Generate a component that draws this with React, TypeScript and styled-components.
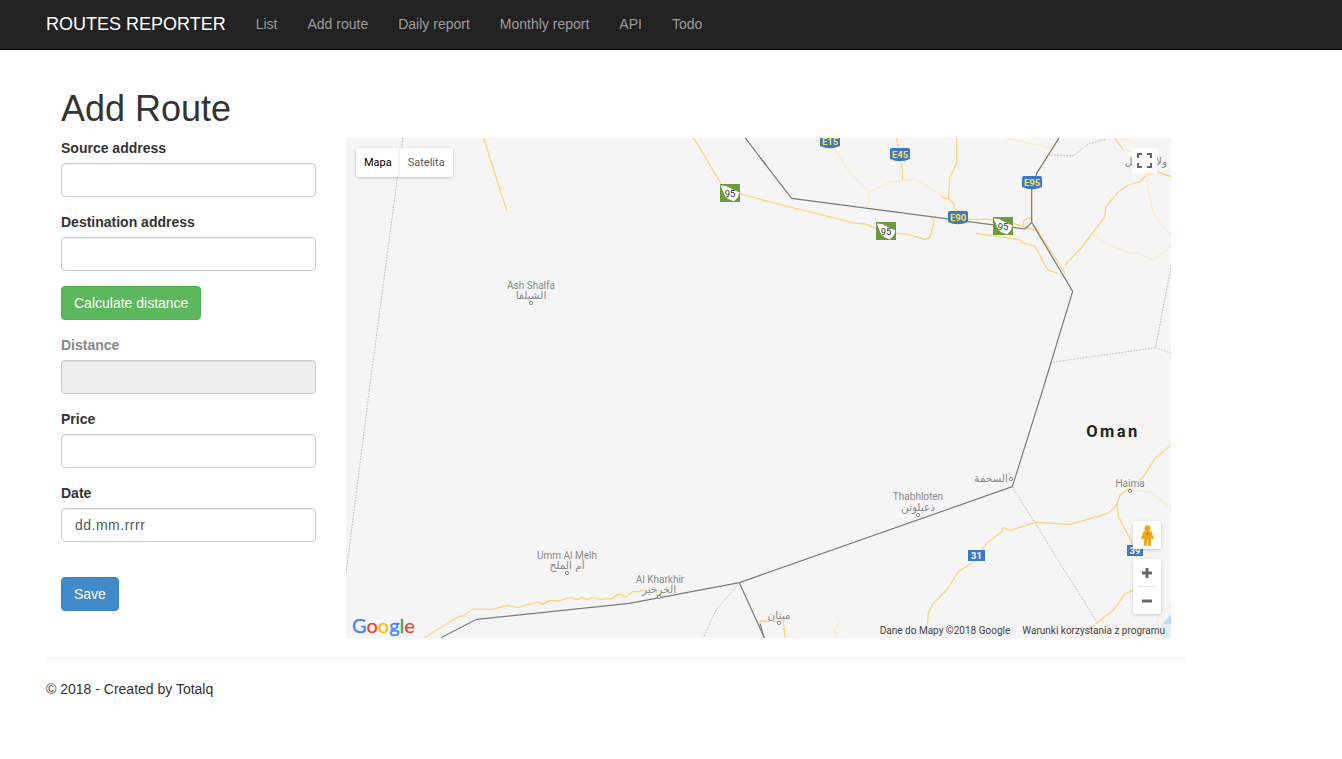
import React from "react";
import styled, { createGlobalStyle } from "styled-components";

const Global = createGlobalStyle`
  html, body { margin: 0; padding: 0; background: #fff; }
  body { font-family: "Liberation Sans", Arial, sans-serif; font-size: 14px; line-height: 20px; color: #333; }
  * { box-sizing: border-box; }
`;

const Navbar = styled.nav`
  height: 50px;
  background: #222;
  border-bottom: 1px solid #080808;
  display: flex;
  align-items: flex-start;
  padding-left: 31px;
`;
const Brand = styled.a`
  font-size: 18px;
  line-height: 20px;
  padding: 14px 15px;
  color: #fff;
`;
const NavLink = styled.a`
  font-size: 14px;
  line-height: 20px;
  padding: 14px 15px;
  color: #9d9d9d;
`;
const Page = styled.main`
  width: 1140px;
  margin-left: 46px;
  padding-top: 39px;
`;
const Title = styled.h2`
  margin: 0 0 9px 15px;
  font-size: 36px;
  line-height: 40px;
  font-weight: 500;
  color: #333;
`;
const Row = styled.div`
  display: flex;
  gap: 30px;
  padding: 0 15px;
`;
const Form = styled.form`
  width: 255px;
  flex: none;
`;
const Group = styled.div`
  margin-bottom: 15px;
`;
const Label = styled.label<{ $muted?: boolean }>`
  display: block;
  font-weight: 700;
  margin-bottom: 5px;
  color: ${(p) => (p.$muted ? "#8a8a8a" : "#333")};
`;
const Input = styled.input`
  display: block;
  width: 100%;
  height: 34px;
  padding: 6px 12px;
  font: 14px/20px "Liberation Sans", Arial, sans-serif;
  color: #555;
  background: #fff;
  border: 1px solid #ccc;
  border-radius: 4px;
  box-shadow: inset 0 1px 1px rgba(0, 0, 0, 0.075);
  &:disabled { background: #eee; }
`;
const DateInput = styled(Input)`
  padding-left: 13px;
  letter-spacing: 0.5px;
`;
const Button = styled.button<{ $kind: "success" | "primary" }>`
  display: block;
  height: 34px;
  padding: 6px 12px;
  font: 14px/20px "Liberation Sans", Arial, sans-serif;
  color: #fff;
  border-radius: 4px;
  border: 1px solid ${(p) => (p.$kind === "success" ? "#4cae4c" : "#357ebd")};
  background: ${(p) => (p.$kind === "success" ? "#5cb85c" : "#428bca")};
`;
const SaveWrap = styled.div`
  margin-top: 35px;
`;
const MapBox = styled.div`
  position: relative;
  width: 825px;
  height: 500px;
  flex: none;
  overflow: hidden;
  background: #f5f5f5;
  font-family: Roboto, Arial, sans-serif;
`;
const Canvas = styled.svg`
  display: block;
`;
const Road = styled.path<{ $minor?: boolean }>`
  fill: none;
  stroke: ${(p) => (p.$minor ? "#fde9bd" : "#fdd27a")};
  stroke-width: ${(p) => (p.$minor ? 3 : 3.8)};
  stroke-linejoin: round;
`;
const Border = styled.path`
  fill: none;
  stroke: #7b7b7b;
  stroke-width: 3.6;
  stroke-linejoin: round;
`;
const Dashed = styled.path`
  fill: none;
  stroke: #b4b4b4;
  stroke-width: 2.6;
  stroke-dasharray: 5 4;
`;
const PlaceText = styled.text<{ $arabic?: boolean }>`
  font-family: ${(p) => (p.$arabic ? '"DejaVu Sans", sans-serif' : "Roboto, sans-serif")};
  font-size: ${(p) => (p.$arabic ? 10.5 : 10)}px;
  fill: #8a8a8a;
  text-anchor: middle;
  paint-order: stroke;
  stroke: #f5f5f5;
  stroke-width: 2px;
`;
const CountryText = styled.text`
  font-family: Roboto, sans-serif;
  font-size: 16.5px;
  font-weight: 700;
  letter-spacing: 2.4px;
  fill: #222;
  text-anchor: middle;
`;
const ShieldText = styled.text<{ $fill: string; $size: number }>`
  font-family: Roboto, sans-serif;
  font-size: ${(p) => p.$size}px;
  font-weight: ${(p) => (p.$fill === "#333" ? 400 : 700)};
  fill: ${(p) => p.$fill};
  text-anchor: middle;
`;
const MapTypes = styled.div`
  position: absolute;
  left: 10px;
  top: 10px;
  height: 29px;
  display: flex;
  background: #fff;
  border-radius: 2px;
  box-shadow: 0 1px 4px -1px rgba(0, 0, 0, 0.3);
`;
const MapType = styled.div<{ $active?: boolean }>`
  font-size: 11px;
  line-height: 29px;
  padding: 0 8px;
  color: ${(p) => (p.$active ? "#000" : "#565656")};
  &:first-child { padding-right: 7px; }
  & + & { border-left: 1px solid #eee; }
`;
const Fullscreen = styled.div`
  position: absolute;
  left: 786px;
  top: 10px;
  width: 25px;
  height: 25px;
  background: #fff;
  display: flex;
  align-items: center;
  justify-content: center;
`;
const Pegman = styled.div`
  position: absolute;
  left: 787px;
  top: 383px;
  width: 28px;
  height: 28px;
  background: #fff;
  border-radius: 2px;
  box-shadow: 0 1px 4px -1px rgba(0, 0, 0, 0.3);
  display: flex;
  align-items: center;
  justify-content: center;
`;
const Zoom = styled.div`
  position: absolute;
  left: 787px;
  top: 421px;
  width: 28px;
  height: 55px;
  background: #fff;
  border-radius: 2px;
  box-shadow: 0 1px 4px -1px rgba(0, 0, 0, 0.3);
  display: flex;
  flex-direction: column;
  align-items: center;
`;
const ZoomBtn = styled.div`
  height: 27px;
  width: 100%;
  display: flex;
  align-items: center;
  justify-content: center;
`;
const ZoomRule = styled.div`
  width: 19px;
  height: 1px;
  background: #e6e6e6;
`;
const Attribution = styled.div`
  position: absolute;
  right: 0;
  bottom: 0;
  height: 14px;
  padding: 0 6px 0 6px;
  display: flex;
  gap: 12px;
  font-size: 10px;
  line-height: 14px;
  color: #444;
  background: rgba(245, 245, 245, 0.7);
`;
const Logo = styled.div`
  position: absolute;
  left: 6px;
  bottom: 1px;
  font-family: Lato, sans-serif;
  font-size: 20px;
  line-height: 24px;
  font-weight: 400;
  -webkit-text-stroke: 0.3px currentColor;
  text-shadow: 0 0 2px #fff;
`;
const LogoLetter = styled.span<{ $c: string }>`
  color: ${(p) => p.$c};
`;
const Rule = styled.hr`
  margin: 20px 0;
  border: 0;
  border-top: 1px solid #eee;
`;
const Footer = styled.p`
  margin: 0 0 10px;
`;

const GreenShield = ({ x, y }: { x: number; y: number }) => (
  <g transform={`translate(${x},${y})`}>
    <rect width="20" height="18" fill="#6a9b3f" />
    <path d="M0.5 1.5 L6 2 L12 5 L19.5 8.5 L18 13 L14 17.5 L8 15 L5 12 L3 7 Z" fill="#fff" />
    <ShieldText x="10" y="13" $fill="#333" $size={9.5}>95</ShieldText>
  </g>
);
const BlueShield = ({ x, y, t }: { x: number; y: number; t: string }) => (
  <g transform={`translate(${x},${y})`}>
    <path d="M0 2 Q0 0 2 0 L18 0 Q20 0 20 2 L20 11 Q10 15.5 0 11 Z" fill="#3b78c6" />
    <ShieldText x="10" y="10" $fill="#fde04a" $size={9.5}>{t}</ShieldText>
  </g>
);
const RouteBox = ({ x, y, t, w }: { x: number; y: number; t: string; w: number }) => (
  <g transform={`translate(${x},${y})`}>
    <rect width={w} height="11" fill="#3b78c6" />
    <ShieldText x={w / 2} y="9" $fill="#fff" $size={9.5}>{t}</ShieldText>
  </g>
);
const Dot = ({ x, y }: { x: number; y: number }) => (
  <circle cx={x} cy={y} r="1.6" fill="#fff" stroke="#777" strokeWidth="0.9" />
);
const Place = ({ x, y, t }: { x: number; y: number; t: string }) => <PlaceText x={x} y={y}>{t}</PlaceText>;
const Arabic = ({ x, y, t }: { x: number; y: number; t: string }) => <PlaceText $arabic x={x} y={y}>{t}</PlaceText>;

const MapDrawing = () => (
  <Canvas width="825" height="500" viewBox="0 0 825 500">
    <path d="M825 500 L825 476 L815 488 L815 500 Z" fill="#bcdcf5" />
    <g transform="translate(0,-8) scale(0.33333)">
      <Dashed d="M170 24 L70 780" />
      <Road d="M413 24 L483 244" />
      <Road d="M1043 24 L1125 160" />
      <Road d="M1182 192 L1260 212" />
      <Border d="M1198 24 L1260 105" />
    </g>
    <g transform="translate(414,-8) scale(0.33333)">
      <Road $minor d="M225 55 L255 110 L325 187 L328 210 L320 232" />
      <Road $minor d="M325 187 L390 157 L460 148 L480 155 L545 195" />
      <Road d="M545 195 L550 205 L565 205 L582 222 L585 238 L598 243" />
      <Road d="M410 24 L415 55 M425 95 L428 150" />
      <Road d="M590 24 L590 100 L570 140 L565 205" />
      <Road $minor d="M735 24 L875 55" />
      <Road d="M0 208 L288 280 L315 282 L350 296 L410 310 L445 313 L495 328 L510 322 L522 275 L515 262" />
      <Road d="M625 268 L700 268 M760 280 L790 290 L830 302 M790 285 L790 272 L812 262" />
      <Road d="M648 310 L780 330 L785 338 L825 348 L855 405 L865 420 L892 430" />
      <Road d="M825 290 L915 430" />
      <Road d="M915 405 L965 352 L1035 260 L1037 232 L1075 185 L1105 165 L1140 155 L1160 135 L1190 125 L1240 142" />
      <Road d="M815 280 L815 170 M830 130 L865 75 L897 24" />
      <Road $minor d="M1160 135 L1165 180 L1182 255 L1240 325" />
      <Road $minor d="M998 312 L1045 345 L1110 368 L1140 372 L1178 390 L1225 355 L1240 330" />
      <Road d="M1065 24 L1090 60" />
      <Road $minor d="M1090 60 L1130 70 L1175 55 M1085 24 L1130 40" />
      <Dashed d="M865 75 L940 77 L985 42 L1035 28" />
      <Dashed d="M1240 370 L1187 653 L875 697 M1187 653 L1240 672" />
      <Border d="M0 82 L95 205 L795 297 L815 277 L938 484 L848 780" />
      <Border d="M815 277 L815 180 L830 130 L865 75 L897 24" />
    </g>
    <g transform="translate(0,252) scale(0.33333)">
      <Dashed d="M70 0 L0 550" />
      <Dashed d="M1175 585 L1110 660 L1072 743" />
      <Road d="M235 743 L340 678 L350 678 L382 658 L440 658 L485 646 L515 653 L575 636 L590 643 L612 631 L640 633 L672 622 L695 629 L707 622 L722 628 L740 622 L765 628 L800 625 L815 613 L825 613 L838 622 L862 604 L880 605 L885 601 L930 606 L933 620" />
      <Road d="M1235 695 L1260 692" />
      <Border d="M1242 556 L1180 578 L850 640 L392 688 L285 743" />
      <Border d="M1180 578 L1255 743" />
    </g>
    <g transform="translate(414,252) scale(0.33333)">
      <Dashed d="M757 290 L1040 743" />
      <Road d="M500 743 L505 670 L520 640 L560 600 L595 545 L640 515 L680 460 L725 425 L730 413 L750 422 L825 397 L930 403 L1045 370 L1070 345 L1080 315 L1110 295 L1150 260 L1190 200 L1240 160" />
      <Road d="M1072 340 L1075 380 L1110 445 L1130 500" />
      <Road $minor d="M1110 302 L1170 305 L1240 360" />
      <Road d="M960 743 L1010 700 L1060 660 L1095 612 L1120 600" />
      <Road $minor d="M1190 700 L1205 660 L1240 645 M228 682 L243 695 L222 718 L233 743" />
      <Road d="M0 693 L70 695 L75 743" />
      <Border d="M0 700 L12 743" />
      <Border d="M848 0 L757 290 L0 556" />
    </g>
    <GreenShield x={374} y={46} />
    <GreenShield x={530} y={84} />
    <GreenShield x={647} y={79} />
    <BlueShield x={474} y={-3} t="E15" />
    <BlueShield x={544} y={10} t="E45" />
    <BlueShield x={602} y={73} t="E90" />
    <BlueShield x={676} y={38} t="E95" />
    <RouteBox x={622} y={412} w={17} t="31" />
    <RouteBox x={781} y={407} w={16} t="39" />
    <Place x={185} y={151} t="Ash Shalfa" />
    <Arabic x={185} y={161} t="الشيلفا" />
    <Dot x={185} y={165} />
    <Place x={221} y={421} t="Umm Al Melh" />
    <Arabic x={221} y={431} t="أم الملح" />
    <Dot x={221} y={435} />
    <Place x={314} y={445} t="Al Kharkhir" />
    <Arabic x={313} y={455} t="الخرخير" />
    <Dot x={313} y={459} />
    <Place x={572} y={362} t="Thabhloten" />
    <Arabic x={572} y={373} t="ذعبلوتن" />
    <Dot x={572} y={377} />
    <Arabic x={645} y={344} t="السحمة" />
    <Dot x={665} y={341} />
    <Place x={784} y={349} t="Haima" />
    <Dot x={784} y={353} />
    <Arabic x={433} y={481} t="ميثان" />
    <Dot x={433} y={485} />
    <Arabic x={800} y={27} t="ولاية ينقل" />
    <CountryText x={767} y={299}>Oman</CountryText>
  </Canvas>
);

export default function App() {
  return (
    <>
      <Global />
      <Navbar>
        <Brand>ROUTES REPORTER</Brand>
        <NavLink>List</NavLink>
        <NavLink>Add route</NavLink>
        <NavLink>Daily report</NavLink>
        <NavLink>Monthly report</NavLink>
        <NavLink>API</NavLink>
        <NavLink>Todo</NavLink>
      </Navbar>
      <Page>
        <Title>Add Route</Title>
        <Row>
          <Form>
            <Group>
              <Label>Source address</Label>
              <Input />
            </Group>
            <Group>
              <Label>Destination address</Label>
              <Input />
            </Group>
            <Group>
              <Button type="button" $kind="success">Calculate distance</Button>
            </Group>
            <Group>
              <Label $muted>Distance</Label>
              <Input disabled />
            </Group>
            <Group>
              <Label>Price</Label>
              <Input />
            </Group>
            <Group>
              <Label>Date</Label>
              <DateInput defaultValue="dd.mm.rrrr" />
            </Group>
            <SaveWrap>
              <Button type="button" $kind="primary">Save</Button>
            </SaveWrap>
          </Form>
          <MapBox>
            <MapDrawing />
            <MapTypes>
              <MapType $active>Mapa</MapType>
              <MapType>Satelita</MapType>
            </MapTypes>
            <Fullscreen>
              <svg width="15" height="15" viewBox="0 0 15 15">
                <path d="M1 5V1H5M10 1H14V5M14 10V14H10M5 14H1V10" fill="none" stroke="#666" strokeWidth="2" />
              </svg>
            </Fullscreen>
            <Pegman>
              <svg width="13" height="21" viewBox="0 0 13 21">
                <circle cx="6.5" cy="3.2" r="3" fill="#f5a60f" />
                <path d="M2.8 6.5H10.2L12.6 13.5L11 14L9.8 11V20.5H7.2V14H5.8V20.5H3.2V11L2 14L0.4 13.5Z" fill="#f5a60f" stroke="#c98a10" strokeWidth="0.4" />
                <path d="M6.5 7L7.3 8.6L6.5 10.5L5.7 8.6Z" fill="#d9541e" />
              </svg>
            </Pegman>
            <Zoom>
              <ZoomBtn>
                <svg width="12" height="12" viewBox="0 0 12 12">
                  <path d="M6 1V11M1 6H11" stroke="#666" strokeWidth="3" />
                </svg>
              </ZoomBtn>
              <ZoomRule />
              <ZoomBtn>
                <svg width="12" height="12" viewBox="0 0 12 12">
                  <path d="M1 6H11" stroke="#666" strokeWidth="3" />
                </svg>
              </ZoomBtn>
            </Zoom>
            <Logo>
              <LogoLetter $c="#4285f4">G</LogoLetter>
              <LogoLetter $c="#ea4335">o</LogoLetter>
              <LogoLetter $c="#fbbc05">o</LogoLetter>
              <LogoLetter $c="#4285f4">g</LogoLetter>
              <LogoLetter $c="#34a853">l</LogoLetter>
              <LogoLetter $c="#ea4335">e</LogoLetter>
            </Logo>
            <Attribution>
              <span>Dane do Mapy ©2018 Google</span>
              <span>Warunki korzystania z programu</span>
            </Attribution>
          </MapBox>
        </Row>
        <Rule />
        <Footer>© 2018 - Created by Totalq</Footer>
      </Page>
    </>
  );
}
